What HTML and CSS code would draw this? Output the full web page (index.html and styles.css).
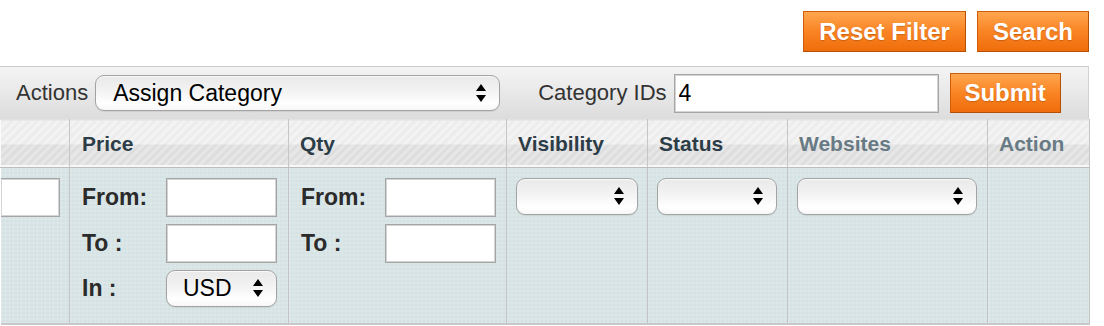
FILE: index.html
```html
<!DOCTYPE html>
<html lang="en">
<head>
    <meta charset="UTF-8">
    <title>Products Grid</title>
    <link rel="stylesheet" href="styles.css">
</head>
<body>
<div class="grid">
    <div class="grid-buttons">
        <button type="button" class="btn">Reset Filter</button>
        <button type="button" class="btn">Search</button>
    </div>

    <div class="massaction">
        <label class="mass-label">Actions</label>
        <div class="select select-action">
            <span>Assign Category</span>
            <svg class="arrows" width="10" height="19" viewBox="0 0 10 19"><path d="M5 0 L10 7 L0 7 Z M0 11 L10 11 L5 18 Z"/></svg>
        </div>
        <label class="mass-label mass-label-ids">Category IDs</label>
        <input class="text-input ids-input" type="text" value="4">
        <button type="button" class="btn btn-submit">Submit</button>
    </div>

    <table class="data">
        <colgroup>
            <col style="width:69px">
            <col style="width:219px">
            <col style="width:218px">
            <col style="width:141px">
            <col style="width:140px">
            <col style="width:200px">
            <col style="width:102px">
        </colgroup>
        <thead>
        <tr class="headings">
            <th></th>
            <th>Price</th>
            <th>Qty</th>
            <th>Visibility</th>
            <th>Status</th>
            <th class="nosort">Websites</th>
            <th class="nosort">Action</th>
        </tr>
        <tr class="filter">
            <td class="first"><input class="text-input cut-input" type="text"></td>
            <td>
                <div class="range">
                    <span>From:</span><input class="text-input" type="text">
                    <span>To :</span><input class="text-input" type="text">
                    <span>In :</span>
                    <div class="select select-small">
                        <span>USD</span>
                        <svg class="arrows" width="10" height="19" viewBox="0 0 10 19"><path d="M5 0 L10 7 L0 7 Z M0 11 L10 11 L5 18 Z"/></svg>
                    </div>
                </div>
            </td>
            <td>
                <div class="range">
                    <span>From:</span><input class="text-input" type="text">
                    <span>To :</span><input class="text-input" type="text">
                </div>
            </td>
            <td>
                <div class="select" style="width:122px">
                    <span></span>
                    <svg class="arrows" width="10" height="19" viewBox="0 0 10 19"><path d="M5 0 L10 7 L0 7 Z M0 11 L10 11 L5 18 Z"/></svg>
                </div>
            </td>
            <td>
                <div class="select" style="width:120px">
                    <span></span>
                    <svg class="arrows" width="10" height="19" viewBox="0 0 10 19"><path d="M5 0 L10 7 L0 7 Z M0 11 L10 11 L5 18 Z"/></svg>
                </div>
            </td>
            <td>
                <div class="select" style="width:180px">
                    <span></span>
                    <svg class="arrows" width="10" height="19" viewBox="0 0 10 19"><path d="M5 0 L10 7 L0 7 Z M0 11 L10 11 L5 18 Z"/></svg>
                </div>
            </td>
            <td></td>
        </tr>
        </thead>
    </table>
</div>
</body>
</html>
```

FILE: styles.css
```css
body {
    margin: 0;
    font-family: "Liberation Sans", Arial, Helvetica, sans-serif;
    background-color: #fff;
    color: #2f2f2f;
}
.grid {
    width: 1089px;
}
.grid-buttons {
    display: flex;
    justify-content: flex-end;
    gap: 11px;
    height: 66px;
    padding-top: 11px;
    box-sizing: border-box;
}
.btn {
    height: 41px;
    padding: 0 15px;
    border: 1px solid #cf5d0a;
    border-right-color: #b54f06;
    border-bottom-color: #b54f06;
    background: linear-gradient(#ffa64f, #f98424 50%, #f06d0b);
    color: #fff;
    font-family: inherit;
    font-weight: bold;
    font-size: 24px;
    text-shadow: 0 1px 1px rgba(120, 50, 0, 0.35);
    cursor: pointer;
}
.massaction {
    display: flex;
    align-items: center;
    height: 52px;
    padding-left: 16px;
    border-top: 1px solid #cdcdcd;
    border-right: 1px solid #d2d2d2;
    background: linear-gradient(#f4f4f4, #e6e6e6 60%, #dcdcdc);
}
.mass-label {
    font-size: 22px;
    color: #333;
}
.mass-label-ids {
    margin-left: 38px;
}
.select {
    display: flex;
    align-items: center;
    justify-content: space-between;
    box-sizing: border-box;
    height: 37px;
    padding: 0 13px 0 17px;
    border: 1px solid #a3a3a3;
    border-radius: 9px;
    background: linear-gradient(#e9e9e9, #f3f3f3 45%, #fff 80%, #f7f7f7);
    box-shadow: inset 0 1px 1px rgba(255, 255, 255, 0.8), 0 1px 1px rgba(0, 0, 0, 0.08);
    font-size: 23px;
    font-weight: normal;
    color: #000;
}
.select-action {
    width: 405px;
    height: 36px;
    margin-left: 7px;
}
.select-small {
    width: 111px;
}
.arrows {
    flex: none;
    fill: #000;
}
.text-input {
    box-sizing: border-box;
    height: 39px;
    padding: 0 4px;
    border: 1px solid #a5a5a5;
    box-shadow: inset 0 0 0 1px #d4d4d4;
    background-color: #fff;
    font-family: inherit;
    font-size: 23px;
    color: #000;
}
.ids-input {
    width: 265px;
    margin-left: 7px;
}
.btn-submit {
    width: 111px;
    height: 40px;
    margin-left: 11px;
    padding: 0;
}
.data {
    width: 1089px;
    border-collapse: collapse;
    table-layout: fixed;
}
.headings th {
    height: 47px;
    padding: 0 0 0 11px;
    text-align: left;
    font-size: 21px;
    color: #2c3d47;
    border-top: 1px solid #e2e2e2;
    border-right: 1px solid #c6c6c6;
    border-left: 1px solid #fbfbfb;
    border-bottom: 1px solid #bdbdbd;
    background:
        linear-gradient(rgba(255, 255, 255, 0.25) 50%, rgba(0, 0, 0, 0.035) 50%),
        repeating-linear-gradient(-45deg, #e5e5e5 0 3px, #efefef 3px 6px);
    box-shadow: inset 0 -2px 0 #f7f7f7;
}
.headings th:nth-child(2) {
    padding-left: 12px;
}
.headings th.nosort {
    color: #687a84;
}
.filter td {
    height: 156px;
    padding: 10px 0 0 9px;
    vertical-align: top;
    box-sizing: border-box;
    border-right: 1px solid #c4c4c4;
    border-left: 1px solid #c4c4c4;
    border-bottom: 2px solid #c8c8c8;
    background:
        repeating-linear-gradient(0deg, rgba(255, 255, 255, 0.18) 0 1px, transparent 1px 4px),
        repeating-linear-gradient(90deg, rgba(255, 255, 255, 0.18) 0 1px, transparent 1px 4px),
        #d5e2e4;
}
.filter td.first {
    padding-left: 0;
    border-left: none;
}
.cut-input {
    width: 59px;
    border-left: none;
}
.range {
    display: grid;
    grid-template-columns: 84px 111px;
    row-gap: 7px;
    align-items: center;
    margin-left: 3px;
    font-size: 23px;
    font-weight: bold;
    color: #2b2b2b;
}
.range .select {
    height: 37px;
    padding-left: 16px;
}
```
